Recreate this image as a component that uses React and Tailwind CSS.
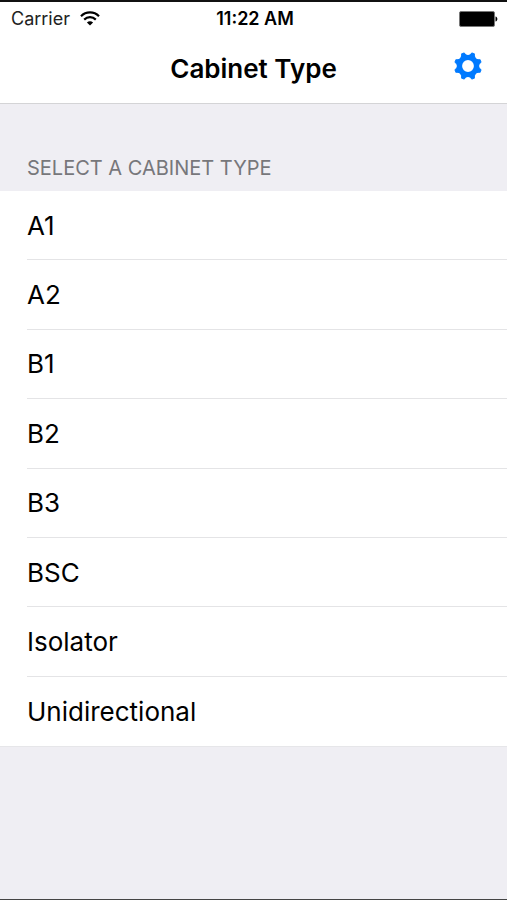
const CABINET_TYPES = ['A1', 'A2', 'B1', 'B2', 'B3', 'BSC', 'Isolator', 'Unidirectional'];

const TOOTH_ANGLES = [22.5, 67.5, 112.5, 157.5, 202.5, 247.5, 292.5, 337.5];

function WifiIcon() {
  return (
    <svg viewBox="0 0 20 15" className="w-5 h-[15px]" fill="none" stroke="#000" strokeWidth="2.2" aria-hidden="true">
      <path d="M1 5.2C6 0.2 14 0.2 19 5.2" />
      <path d="M4.2 8.6C7.5 5.4 12.5 5.4 15.8 8.6" />
      <path d="M10 14.6L6.9 11.5C8.7 9.7 11.3 9.7 13.1 11.5Z" fill="#000" stroke="none" />
    </svg>
  );
}

function BatteryIcon() {
  return (
    <svg viewBox="0 0 40 16" className="w-10 h-4" aria-hidden="true">
      <rect x="0.5" y="0.5" width="35" height="15" rx="1.5" fill="#000" stroke="#777" />
      <path d="M36.5 5.5C39 6 39 10 36.5 10.5Z" fill="#000" />
    </svg>
  );
}

function GearIcon() {
  return (
    <svg viewBox="-15 -15 30 30" className="w-[30px] h-[30px]" aria-hidden="true">
      <circle r="8.4" fill="none" stroke="#007aff" strokeWidth="5" />
      {TOOTH_ANGLES.map((angle) => (
        <path
          key={angle}
          transform={`rotate(${angle})`}
          d="M-4 -9.8Q-2 -10.6 -1.3 -13.5L1.3 -13.5Q2 -10.6 4 -9.8L3 -7.5L-3 -7.5Z"
          fill="#007aff"
          stroke="#007aff"
          strokeWidth="1"
          strokeLinejoin="round"
        />
      ))}
    </svg>
  );
}

function StatusBar() {
  return (
    <div className="grid grid-cols-3 items-center h-[33px] pl-[11px] pr-2 text-lg leading-6">
      <div className="flex items-center gap-[10px] text-[#222]">
        <span>Carrier</span>
        <WifiIcon />
      </div>
      <span className="text-center font-semibold">11:22 AM</span>
      <div className="flex justify-end">
        <BatteryIcon />
      </div>
    </div>
  );
}

function NavBar() {
  return (
    <header className="grid grid-cols-[1fr_auto_1fr] h-[69px] px-6 pt-4 border-b border-[#d4d4d6]">
      <h1 className="col-start-2 text-[26px] leading-9 font-semibold">Cabinet Type</h1>
      <button type="button" aria-label="Settings" className="self-start justify-self-end">
        <GearIcon />
      </button>
    </header>
  );
}

function App() {
  return (
    <div className="min-h-screen flex flex-col bg-[#efeef3] border-t-2 border-b border-t-[#111] border-b-[#444] text-black font-['Inter','Liberation_Sans',sans-serif]">
      <div className="bg-white">
        <StatusBar />
        <NavBar />
      </div>
      <main className="flex-grow">
        <h2 className="flex items-end h-[87px] px-[27px] pb-[9px] text-xl leading-7 text-[#77777b]">
          SELECT A CABINET TYPE
        </h2>
        <ul className="grid auto-rows-fr h-[556px] pl-[27px] bg-white border-b border-[#e6e6e9] divide-y divide-[#e4e4e6]">
          {CABINET_TYPES.map((type) => (
            <li key={type} className="flex">
              <button type="button" className="flex-grow pt-px text-left text-[26px] leading-8">
                {type}
              </button>
            </li>
          ))}
        </ul>
      </main>
    </div>
  );
}

export default App;
